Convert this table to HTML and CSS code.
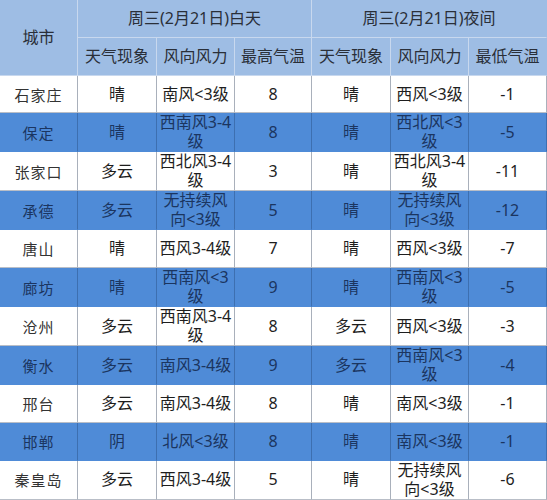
FILE: index.html
```html
<!DOCTYPE html>
<html lang="zh">
<head>
<meta charset="utf-8">
<link rel="stylesheet" href="styles.css">
</head>
<body>
<div class="table">
  <div class="cell head city-h">城市</div>
  <div class="cell head span3">周三(2月21日)白天</div>
  <div class="cell head span3 last">周三(2月21日)夜间</div>
  <div class="cell head">天气现象</div>
  <div class="cell head">风向风力</div>
  <div class="cell head">最高气温</div>
  <div class="cell head">天气现象</div>
  <div class="cell head">风向风力</div>
  <div class="cell head last">最低气温</div>

  <div class="cell city">石家庄</div><div class="cell">晴</div><div class="cell">南风&lt;3级</div><div class="cell">8</div><div class="cell">晴</div><div class="cell">西风&lt;3级</div><div class="cell last">-1</div>
  <div class="cell city blue">保定</div><div class="cell blue">晴</div><div class="cell blue">西南风3&#8288;-&#8288;4级</div><div class="cell blue">8</div><div class="cell blue">晴</div><div class="cell blue">西北风&lt;3级</div><div class="cell blue last">-5</div>
  <div class="cell city">张家口</div><div class="cell">多云</div><div class="cell">西北风3&#8288;-&#8288;4级</div><div class="cell">3</div><div class="cell">晴</div><div class="cell">西北风3&#8288;-&#8288;4级</div><div class="cell last">-11</div>
  <div class="cell city blue">承德</div><div class="cell blue">多云</div><div class="cell blue">无持续风向&lt;3级</div><div class="cell blue">5</div><div class="cell blue">晴</div><div class="cell blue">无持续风向&lt;3级</div><div class="cell blue last">-12</div>
  <div class="cell city">唐山</div><div class="cell">晴</div><div class="cell">西风3&#8288;-&#8288;4级</div><div class="cell">7</div><div class="cell">晴</div><div class="cell">西风&lt;3级</div><div class="cell last">-7</div>
  <div class="cell city blue">廊坊</div><div class="cell blue">晴</div><div class="cell blue">西南风&lt;3级</div><div class="cell blue">9</div><div class="cell blue">晴</div><div class="cell blue">西南风&lt;3级</div><div class="cell blue last">-5</div>
  <div class="cell city">沧州</div><div class="cell">多云</div><div class="cell">西南风3&#8288;-&#8288;4级</div><div class="cell">8</div><div class="cell">多云</div><div class="cell">西风&lt;3级</div><div class="cell last">-3</div>
  <div class="cell city blue">衡水</div><div class="cell blue">多云</div><div class="cell blue">南风3&#8288;-&#8288;4级</div><div class="cell blue">9</div><div class="cell blue">多云</div><div class="cell blue">西南风&lt;3级</div><div class="cell blue last">-4</div>
  <div class="cell city">邢台</div><div class="cell">多云</div><div class="cell">南风3&#8288;-&#8288;4级</div><div class="cell">8</div><div class="cell">晴</div><div class="cell">南风&lt;3级</div><div class="cell last">-1</div>
  <div class="cell city blue">邯郸</div><div class="cell blue">阴</div><div class="cell blue">北风&lt;3级</div><div class="cell blue">8</div><div class="cell blue">晴</div><div class="cell blue">南风&lt;3级</div><div class="cell blue last">-1</div>
  <div class="cell city">秦皇岛</div><div class="cell">多云</div><div class="cell">西风3&#8288;-&#8288;4级</div><div class="cell">5</div><div class="cell">晴</div><div class="cell">无持续风向&lt;3级</div><div class="cell last">-6</div>
</div>
</body>
</html>
```
FILE: styles.css
```css
html, body {
  margin: 0;
  padding: 0;
  background: #ffffff;
}
.table {
  width: 547px;
  height: 500px;
  display: grid;
  grid-template-columns: 78px 79px 78px 77px 79px 78px 78px;
  grid-template-rows: repeat(13, 1fr);
  font-family: "Noto Sans", "Noto Sans CJK SC", sans-serif;
  font-size: 16px;
  color: #1e1e1e;
}
.cell {
  box-sizing: border-box;
  display: flex;
  align-items: center;
  justify-content: center;
  text-align: center;
  padding: 0 1px;
  line-height: 19px;
  border-right: 1px solid #a9b0bb;
  border-bottom: 1px solid #b9bec7;
  background: #ffffff;
  overflow: visible;
}
.head {
  background: #9ebde4;
  color: #2a2f38;
  border-right-color: #c8d8ee;
  border-bottom-color: #c8d8ee;
}
.head.last {
  border-right-color: #9ebde4;
}
.city-h {
  grid-row: span 2;
}
.span3 {
  grid-column: span 3;
}
.city {
  font-family: "Noto Sans CJK SC", sans-serif;
  font-size: 15px;
  letter-spacing: 1px;
  color: #333333;
}
.blue {
  background: #4f8bd7;
  color: #1b3560;
  border-right-color: #3d6fb0;
  border-bottom-color: #4f8bd7;
}
```
